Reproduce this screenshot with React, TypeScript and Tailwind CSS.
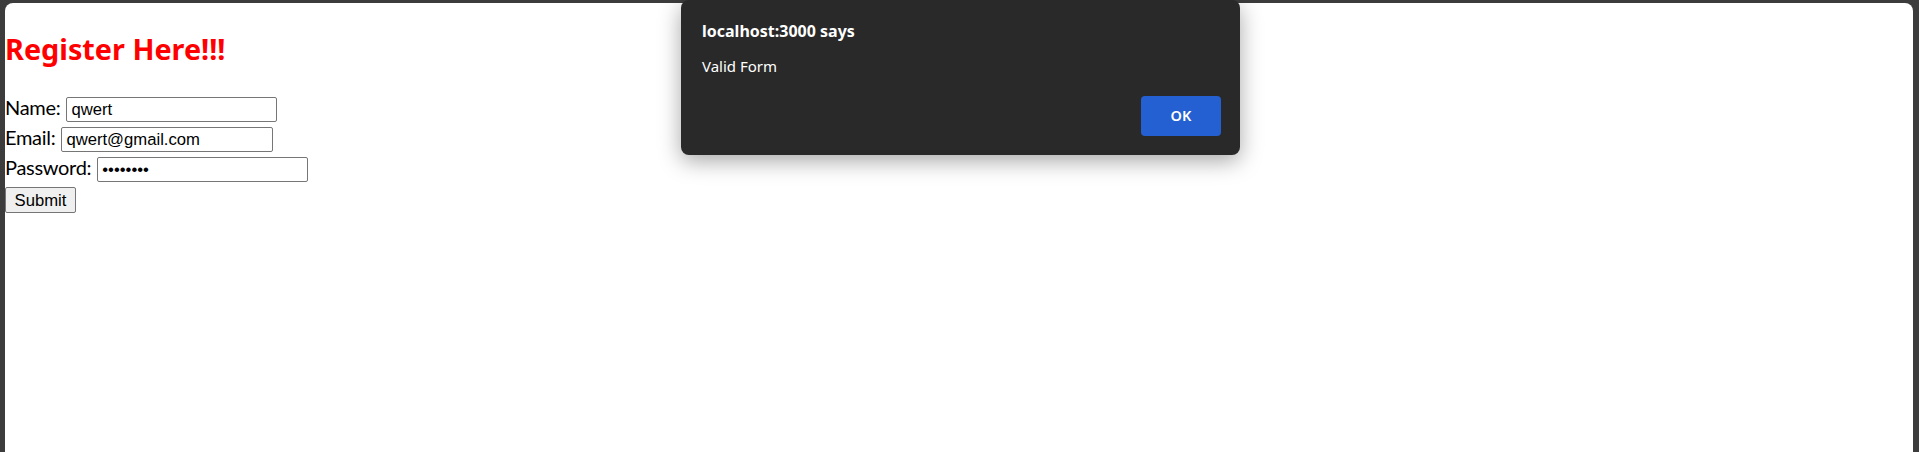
import React, { useState } from 'react';

const uiFont = "font-['Noto_Sans','Open_Sans',sans-serif]";
const labelFont = "font-['Lato','Noto_Sans',sans-serif]";
const fieldFont = "font-['Liberation_Sans',Arial,sans-serif]";

const Field: React.FC<{ label: string; value: string; width: string }> = ({ label, value, width }) => (
  <div className="flex items-start h-[30px]">
    <span className={`${labelFont} text-[20px] leading-[24px] tracking-[-0.3px] text-black`}>{label}</span>
    <input
      type="text"
      defaultValue={value}
      className={`${fieldFont} ${width} ml-[6px] mt-[2px] h-[25px] border border-[#767676] rounded-[2px] bg-white pl-[4px] text-[16.67px] text-black outline-none`}
    />
  </div>
);

const App: React.FC = () => {
  const [open, setOpen] = useState(true);

  return (
    <div className={`relative w-[1919px] h-[452px] overflow-hidden bg-[#3c3c3c] pt-[3px] pl-[5px] pr-[6px] ${uiFont}`}>
      <div className="h-full bg-white rounded-t-[8px]">
        <h2 className="pt-[26px] mb-[26px] text-[28.8px] leading-[40px] font-bold text-[#ff0000]">Register Here!!!</h2>

        <form onSubmit={e => { e.preventDefault(); setOpen(true); }}>
          <Field label="Name:" value="qwert" width="w-[211px]" />
          <Field label="Email:" value="qwert@gmail.com" width="w-[212px]" />
          <Field label="Password:" value="••••••••" width="w-[211px]" />
          <div className="h-[30px]">
            <button
              type="submit"
              className={`${fieldFont} mt-[2px] w-[71px] h-[26px] border border-[#767676] rounded-[2px] bg-[#efefef] text-[16.67px] text-black`}
            >
              Submit
            </button>
          </div>
        </form>
      </div>

      {open && (
        <div className="absolute left-[681px] top-0 w-[559px] h-[155px] rounded-[8px] bg-[#292929] shadow-[0_6px_22px_rgba(0,0,0,0.35)] flex flex-col pt-[20px] pl-[21px] pr-[19px] pb-[19px]">
          <div className="text-[16px] leading-[22px] font-bold text-white">localhost:3000 says</div>
          <div className="mt-[14px] text-[15px] leading-[20px] text-white">Valid Form</div>
          <div className="mt-auto flex justify-end">
            <button
              onClick={() => setOpen(false)}
              className="w-[80px] h-[40px] rounded-[4px] bg-[#2460d1] text-[14.5px] font-semibold text-white"
            >
              OK
            </button>
          </div>
        </div>
      )}
    </div>
  );
};

export default App;
